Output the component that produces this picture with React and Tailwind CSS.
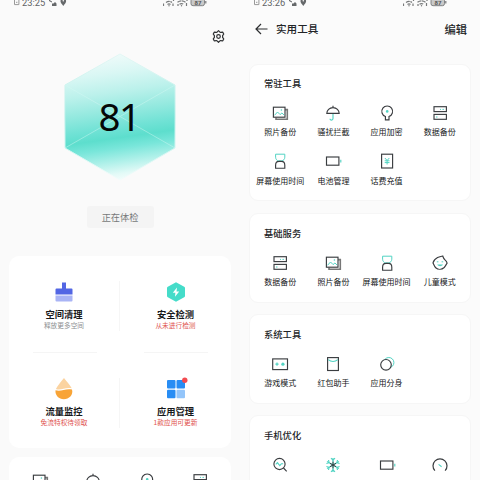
import React from 'react';

const INK = '#3a3d40';
const MINT = '#52d3c3';

function Svg({ children, size = 20 }) {
  return (
    <svg width={size} height={size} viewBox="0 0 20 20" fill="none" stroke={INK} strokeWidth="1.15" className="block shrink-0 overflow-visible">
      {children}
    </svg>
  );
}

const icons = {
  photo: (
    <Svg>
      <path d="M6 14.500v1.700h11.300V6.600h-2.200" stroke="#777" strokeWidth="1.6" />
      <rect x="3.4" y="4.2" width="11.6" height="10" fill="#fff" />
      <path d="M4.500 12.300l3-3.300 2.600 2.600 1.800-1.600 2.200 2" stroke={MINT} strokeWidth="1" />
      <circle cx="11.4" cy="7" r=".8" fill={MINT} stroke="none" />
    </Svg>
  ),
  umbrella: (
    <Svg>
      <path d="M10 11v4.600c0 2-3 2-3 .2" stroke={MINT} />
      <path d="M3.800 10.400c0-3.200 2.600-5.800 6.200-5.800s6.200 2.600 6.200 5.800zM10 4.600V2.800" />
    </Svg>
  ),
  keyhole: (
    <Svg>
      <path d="M8.400 16.800v-3.300a5.400 5.400 0 1 1 3.600 0v3.300z" />
      <circle cx="10.2" cy="8.4" r="1.3" fill={MINT} stroke="none" />
    </Svg>
  ),
  drives: (
    <Svg>
      <rect x="4" y="3.7" width="12.4" height="4.9" />
      <rect x="4" y="11.4" width="12.4" height="4.9" />
      <path d="M10 6.400h1M12.500 6.400h1.400M6 14h1.500" stroke={MINT} strokeWidth="1" />
    </Svg>
  ),
  hourglass: (
    <Svg>
      <path d="M5.600 3.200h9.200v3c0 2-1.400 3.400-3 3.700H8.600c-1.600-.3-3-1.700-3-3.700z" stroke={MINT} strokeWidth="1" />
      <path d="M5.600 17.200v-3c0-2.200 1.500-3.800 3.400-3.800h2.400c1.900 0 3.400 1.600 3.400 3.800v3z" />
    </Svg>
  ),
  battery: (
    <Svg>
      <rect x="3.5" y="6" width="12.4" height="8.2" />
      <path d="M17.800 8.700v2.800" stroke={MINT} />
    </Svg>
  ),
  recharge: (
    <Svg>
      <rect x="4.6" y="3.2" width="11" height="13.8" />
      <path d="M7.900 7l2.200 2.500L12.300 7M10.100 9.500v4M7.700 9.800h4.800M7.700 11.600h4.800" stroke={MINT} strokeWidth="1" />
    </Svg>
  ),
  child: (
    <Svg>
      <path d="M3 9.900c.7-3 2.500-4.300 4.600-5.400C9.500 3.600 11 3.300 12.700 3c.5 1.700 1.300 2.900 2.500 4.200.9.900 1.600 1.800 1.900 2.900-1.100 1.500-1.500 3-2.900 4.400-2.500 2.300-6.100 2.300-8.500.2-1.500-1.300-1.800-3.200-2.700-4.800z" />
      <path d="M7.200 11.400c1.300 2.300 4.500 2.300 5.800 0z" fill={MINT} stroke="none" />
      <path d="M6.800 8.800h1.600M11.600 8.800h1.600" stroke={MINT} strokeWidth="1" />
    </Svg>
  ),
  game: (
    <Svg>
      <rect x="2.7" y="4.9" width="14.8" height="10.7" />
      <path d="M5.400 10.200h3.200M7 8.600v3.200" stroke={MINT} strokeWidth="1.2" />
      <circle cx="12.9" cy="10.2" r="1.6" fill={MINT} stroke="none" />
    </Svg>
  ),
  packet: (
    <Svg>
      <rect x="4.6" y="3.6" width="10.8" height="12.9" />
      <path d="M5.200 5.600c2.800 2.300 6.800 2.300 9.600 0" stroke={MINT} />
    </Svg>
  ),
  clone: (
    <Svg>
      <circle cx="11.8" cy="8.6" r="5.1" stroke={MINT} strokeWidth="1" />
      <circle cx="9" cy="10.8" r="5.3" fill="#fff" />
    </Svg>
  ),
  scan: (
    <Svg>
      <circle cx="9.5" cy="9" r="5.6" />
      <path d="M13.500 13l3.200 3.400" />
      <path d="M5.800 9.300l1.600-1.600 2.400 3 1.600-2h1.800" stroke={MINT} />
    </Svg>
  ),
  snow: (
    <Svg>
      <path d="M8 3.200l2 2 2-2M8 16.800l2-2 2 2M3.400 8.500l2.700-.8-.6-2.700M16.600 8.500l-2.700-.8.6-2.700M3.400 11.500l2.700.8-.6 2.700M16.600 11.500l-2.700.8.6 2.700" stroke={MINT} />
      <path d="M10 3v14M4 6.500l12 7M16 6.500l-12 7" stroke={MINT} />
      <path d="M10 6.600v6.800M7 8.300l6 3.400M13 8.300l-6 3.400" strokeWidth="1" />
    </Svg>
  ),
  gauge: (
    <Svg>
      <path d="M4.900 15.600a7 7 0 1 1 10.200 0" strokeWidth="1.2" />
      <path d="M8.600 9.400l3 2.400" stroke={MINT} />
    </Svg>
  ),
};

function StatusBar({ time }) {
  return (
    <div className="flex h-[8px] shrink-0 items-start justify-between pl-[13px] pr-[33px] text-[#606365]">
      <div className="flex h-[6px] items-center">
        <svg width="7" height="8" viewBox="0 0 7 8" className="mr-[2px]" fill="none" stroke="#999">
          <path d="M1.500 0v5.600h4.400V0M3 3.300h1.400" />
        </svg>
        <span className="w-[24px] font-[Roboto,'Liberation_Sans',sans-serif] text-[9.300px] leading-[6px]">{time}</span>
        <svg width="21" height="8" viewBox="0 0 21 8" className="ml-[1.500px]" fill="#66696b">
          <path d="M1 .6l3 2v1L1 2zM4 4.500h1.500L7 3l1.500 1.500V7H4zM15.300 7c-1.500-2-2.800-3.200-2.800-4.700a2.800 2.800 0 0 1 5.600 0C18.100 3.800 16.800 5 15.300 7z" />
          <circle cx="15.3" cy="1.8" r=".8" fill="#fbfbfb" />
        </svg>
      </div>
      <svg width="44" height="8" viewBox="0 0 44 8" fill="none" stroke="#77797a" strokeWidth="1.2">
        <path d="M.5 6V3.500M3 2.400q3-2 6 0M4.500 4.400q1.500-1 3 0M10 6V3.500M10.500 0v1M14.500 2.300q4-2.800 8 0M16.500 4.300q2-1.500 4 0M15 6V4M23.500 6V3M24 0v1" strokeDasharray="4 .6" />
        <circle cx="6" cy="5.800" r=".7" fill="#777" stroke="none" />
        <circle cx="18.500" cy="5.800" r=".7" fill="#777" stroke="none" />
        <rect x="28" y="-1.500" width="13.500" height="7.200" rx="2" fill="#c9c9c9" strokeWidth=".9" />
        <path d="M42.800 1v2.500" />
        <text x="31.500" y="4.700" fill="#555" stroke="none" fontSize="6" fontWeight="700" fontFamily="Roboto, sans-serif">87</text>
      </svg>
    </div>
  );
}

function Tool({ icon, label }) {
  return (
    <div className="flex h-[48.700px] flex-col items-center">
      {icons[icon]}
      {label && <span className="mt-[3.500px] whitespace-nowrap text-[8px] leading-[12px] text-[#141618]">{label}</span>}
    </div>
  );
}

function Section({ title, tools, className }) {
  return (
    <section className={`shrink-0 overflow-hidden rounded-[9px] border border-[#f6f6f6] bg-white ${className}`}>
      <h2 className="pl-[14px] text-[9.300px] font-medium leading-[14px] text-[#222426]">{title}</h2>
      <div className="mt-[12.500px] grid grid-cols-4 px-[3.800px]">
        {tools.map(([icon, label]) => <Tool key={icon} icon={icon} label={label} />)}
      </div>
    </section>
  );
}

function Feature({ art, title, note, noteClass }) {
  return (
    <div className="flex flex-col items-center">
      {art}
      <div className="mt-[5px] text-[9.300px] font-bold leading-[13px] text-[#18191b]">{title}</div>
      <div className={`whitespace-nowrap text-[6.700px] leading-[9px] ${noteClass}`}>{note}</div>
    </div>
  );
}

function Hexagon() {
  return (
    <svg width="120" height="132" viewBox="0 0 120 132" className="block">
      <defs>
        <linearGradient id="hex" gradientUnits="userSpaceOnUse" x1="51" y1="3" x2="69" y2="129">
          <stop offset="0" stopColor="#f0fbfa" />
          <stop offset=".15" stopColor="#d9f7f4" />
          <stop offset=".3" stopColor="#bbf1eb" />
          <stop offset=".45" stopColor="#94e9df" />
          <stop offset=".58" stopColor="#70e2d5" />
          <stop offset=".66" stopColor="#5ddecd" />
          <stop offset=".74" stopColor="#79e6da" />
          <stop offset=".85" stopColor="#b2f1ea" />
          <stop offset=".94" stopColor="#e3faf7" />
          <stop offset="1" stopColor="#f6fdfc" />
        </linearGradient>
        <linearGradient id="edge" x1="0" y1="0" x2="0" y2="1">
          <stop offset="0" stopColor="#e4f7f5" />
          <stop offset=".5" stopColor="#b5efe8" />
          <stop offset="1" stopColor="#f3fcfb" />
        </linearGradient>
      </defs>
      <path d="M60 3L115 34V97L60 129L5 97V34Z" fill="url(#hex)" stroke="url(#edge)" />
      <path d="M5 34L115 97M115 34L5 97" stroke="#d6faf5" strokeWidth=".8" opacity=".55" />
      <text x="59" y="80" textAnchor="middle" fontSize="38.500" letterSpacing="-1.500" fontFamily="'Noto Sans', 'Open Sans', sans-serif" fill="#050707">81</text>
    </svg>
  );
}

const brush = (
  <svg width="20" height="22" viewBox="0 0 20 22">
    <path d="M8 1.500h4v6h5.500a1 1 0 0 1 1 1V13.500h-17V8.500a1 1 0 0 1 1-1H8z" fill="#5266e4" />
    <path d="M1.500 14.500h17v5a1 1 0 0 1-1 1h-15a1 1 0 0 1-1-1z" fill="#a9b4f5" />
  </svg>
);

const shield = (
  <svg width="20" height="22" viewBox="0 0 20 22">
    <path d="M10 1.200l8.200 4.600a1.500 1.500 0 0 1 .8 1.300v7.800a1.500 1.500 0 0 1-.8 1.300L10 20.800l-8.200-4.600A1.500 1.500 0 0 1 1 14.900V7.100a1.500 1.500 0 0 1 .8-1.300z" fill="#45dcc9" />
    <path d="M11 6.500L6.800 11.700h2.600L9 15.800l4.200-5.300h-2.700z" fill="#fff" />
  </svg>
);

const drop = (
  <svg width="20" height="22" viewBox="0 0 20 22">
    <path d="M10 0C7 3.800 3.400 7.600 1.900 11c5 1.800 9-2 15.800-.8C16 7 12.800 3.800 10 0z" fill="#fbd3a0" />
    <path d="M1.500 12.300c6 1.500 9.500-2 16.500-.8 1.600 5.500-3 9.700-8.200 9.700-4.800 0-8.900-3.700-8.300-8.900z" fill="#f8a437" />
  </svg>
);

const apps = (
  <svg width="20" height="22" viewBox="0 0 20 22" className="overflow-visible">
    <rect x="1" y="2" width="8.500" height="8.500" rx="1" fill="#288df4" />
    <rect x="10.500" y="2" width="8.500" height="8.500" rx="1" fill="#288df4" />
    <rect x="1" y="11.800" width="8.500" height="8.500" rx="1" fill="#288df4" />
    <rect x="10.500" y="11.800" width="8.500" height="8.500" rx="1" fill="#93c5fa" />
    <circle cx="18.800" cy="2.300" r="2.700" fill="#f24b50" />
  </svg>
);

export default function App() {
  return (
    <main className="flex h-[480px] w-[480px] overflow-hidden bg-[#fbfbfb] font-['Noto_Sans_CJK_SC',sans-serif]">
      <div className="flex h-[480px] w-[240px] flex-col overflow-hidden bg-[#fafafa]">
        <StatusBar time="23:25" />
        <div className="flex h-[43px] shrink-0 justify-end pr-[15px] pt-[22px]">
          <svg width="13" height="13" viewBox="0 0 13 13" fill="none" stroke="#303234" strokeWidth="1.200" strokeLinejoin="round">
            <path d="M5.300 1.900L6.500.7l1.200 1.200.9.500 2.200-.2.900 1.900-1.100 1.500v1.800l1.100 1.500-.9 1.900-2.200-.2-.9.500-1.200 1.200-1.200-1.200-.9-.5-2.200.2-.9-1.900 1.100-1.500V5.600L1.300 4.100l.9-1.900 2.200.2z" />
            <circle cx="6.500" cy="6.500" r="1.800" />
          </svg>
        </div>
        <div className="flex h-[132px] shrink-0 justify-center"><Hexagon /></div>
        <div className="mt-[23px] flex shrink-0 justify-center">
          <button className="h-[22px] w-[67px] rounded-[3px] bg-[#f4f4f4] text-[9.200px] leading-[22px] text-[#77797a]">正在体检</button>
        </div>
        <section className="mx-[9px] mt-[28px] h-[192px] shrink-0 rounded-[10px] bg-white">
          <div className="grid grid-cols-2 pt-[25px]">
            <div className="h-[71px]">
              <div className="h-[50px] border-r border-[#f6f6f6]">
                <Feature art={brush} title="空间清理" note="释放更多空间" noteClass="text-[#8d8f91]" />
              </div>
            </div>
            <Feature art={shield} title="安全检测" note="从未进行检测" noteClass="text-[#e0524e]" />
          </div>
          <div className="flex h-[26px] justify-around">
            <div className="h-px w-[64px] bg-[#f5f5f5]" />
            <div className="h-px w-[64px] bg-[#f5f5f5]" />
          </div>
          <div className="grid grid-cols-2">
            <div className="h-[50px] border-r border-[#f6f6f6]">
              <Feature art={drop} title="流量监控" note="免流特权待领取" noteClass="text-[#e0524e]" />
            </div>
            <Feature art={apps} title="应用管理" note="1款应用可更新" noteClass="text-[#e0524e]" />
          </div>
        </section>
        <section className="mx-[9px] mt-[9px] h-[80px] shrink-0 rounded-[10px] bg-white pt-[14px]">
          <div className="grid grid-cols-4 px-[4.300px]">
            <Tool icon="photo" />
            <Tool icon="umbrella" />
            <Tool icon="keyhole" />
            <Tool icon="drives" />
          </div>
        </section>
      </div>
      <div className="flex h-[480px] w-[240px] flex-col overflow-hidden bg-[#fbfbfb]">
        <StatusBar time="23:26" />
        <header className="flex h-[42px] shrink-0 items-center pl-[15px] pr-[13px] text-[#222426]">
          <svg width="13" height="12" viewBox="0 0 13 12" fill="none" stroke="#2d2f31" strokeWidth="1.200">
            <path d="M12.500 6H1.200M6 1L1 6l5 5" />
          </svg>
          <h1 className="ml-[8px] text-[10.600px] font-medium leading-[16px]">实用工具</h1>
          <span className="ml-auto text-[11.300px] font-medium leading-[16px]">编辑</span>
        </header>
        <div className="mx-[9px] mt-[14px] flex shrink-0 flex-col">
          <Section
            title="常驻工具"
            className="h-[137px] pt-[11px]"
            tools={[
              ['photo', '照片备份'], ['umbrella', '骚扰拦截'], ['keyhole', '应用加密'], ['drives', '数据备份'],
              ['hourglass', '屏幕使用时间'], ['battery', '电池管理'], ['recharge', '话费充值'],
            ]}
          />
          <Section
            title="基础服务"
            className="mt-[12px] h-[90px] pt-[12px]"
            tools={[['drives', '数据备份'], ['photo', '照片备份'], ['hourglass', '屏幕使用时间'], ['child', '儿童模式']]}
          />
          <Section
            title="系统工具"
            className="mt-[11px] h-[90px] pt-[12px]"
            tools={[['game', '游戏模式'], ['packet', '红包助手'], ['clone', '应用分身']]}
          />
          <Section
            title="手机优化"
            className="mt-[11px] h-[90px] pt-[12px]"
            tools={[['scan'], ['snow'], ['battery'], ['gauge']]}
          />
        </div>
      </div>
    </main>
  );
}
